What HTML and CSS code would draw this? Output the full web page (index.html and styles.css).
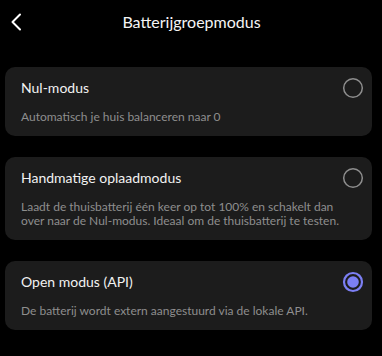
FILE: index.html
```html
<!DOCTYPE html>
<html lang="nl">
<head>
<meta charset="utf-8">
<title>Batterijgroepmodus</title>
<link rel="stylesheet" href="styles.css">
</head>
<body>
<div class="screen">
  <header class="topbar">
    <button class="back" aria-label="Terug">
      <svg width="12" height="18" viewBox="0 0 12 18"><polyline points="10,1.5 2.5,9 10,16.5" fill="none" stroke="#ffffff" stroke-width="2" stroke-linecap="round" stroke-linejoin="round"/></svg>
    </button>
    <h1 class="title">Batterijgroepmodus</h1>
  </header>

  <div class="list">
    <div class="card">
      <div class="card-head">
        <span class="card-title">Nul-modus</span>
        <svg class="radio" width="22" height="22" viewBox="0 0 22 22"><circle cx="11" cy="11" r="9.3" fill="none" stroke="#8e8e8e" stroke-width="1.5"/></svg>
      </div>
      <p class="card-desc">Automatisch je huis balanceren naar 0</p>
    </div>

    <div class="card">
      <div class="card-head">
        <span class="card-title">Handmatige oplaadmodus</span>
        <svg class="radio" width="22" height="22" viewBox="0 0 22 22"><circle cx="11" cy="11" r="9.3" fill="none" stroke="#8e8e8e" stroke-width="1.5"/></svg>
      </div>
      <p class="card-desc">Laadt de thuisbatterij één keer op tot 100% en schakelt dan over naar de Nul-modus. Ideaal om de thuisbatterij te testen.</p>
    </div>

    <div class="card">
      <div class="card-head">
        <span class="card-title">Open modus (API)</span>
        <svg class="radio" width="22" height="22" viewBox="0 0 22 22"><circle cx="11" cy="11" r="9" fill="none" stroke="#7c7ff4" stroke-width="2.2"/><circle cx="11" cy="11" r="5.8" fill="#7c7ff4"/></svg>
      </div>
      <p class="card-desc">De batterij wordt extern aangestuurd via de lokale API.</p>
    </div>
  </div>
</div>
</body>
</html>
```

FILE: styles.css
```css
html, body {
  margin: 0;
  padding: 0;
  background: #000000;
}

body {
  font-family: Lato, "Noto Sans", sans-serif;
  color: #f2f2f2;
  width: 382px;
  height: 356px;
  overflow: hidden;
}

.screen {
  display: flex;
  flex-direction: column;
}

.topbar {
  position: relative;
  height: 44px;
  display: flex;
  align-items: center;
  justify-content: center;
}

.back {
  position: absolute;
  left: 9px;
  top: 13px;
  width: 14px;
  height: 18px;
  padding: 0;
  border: 0;
  background: none;
  display: flex;
  align-items: center;
  justify-content: center;
}

.title {
  margin: 0;
  font-size: 16px;
  font-weight: 400;
  line-height: 20px;
  color: #f5f5f5;
  padding-left: 1px;
}

.list {
  display: flex;
  flex-direction: column;
  gap: 21px;
  padding: 23px 10px 0 5px;
}

.card {
  background: #1c1c1c;
  border-radius: 10px;
  padding: 12px 9px 12px 16px;
}

.card-head {
  display: flex;
  align-items: center;
  justify-content: space-between;
  height: 17px;
}

.card-title {
  font-size: 14px;
  line-height: 17px;
  color: #f2f2f2;
}

.radio {
  display: block;
  margin-right: -1px;
}

.card-desc {
  margin: 14px 0 0 0;
  font-size: 12px;
  line-height: 14px;
  color: #8e8e8e;
  padding-right: 20px;
}
```
